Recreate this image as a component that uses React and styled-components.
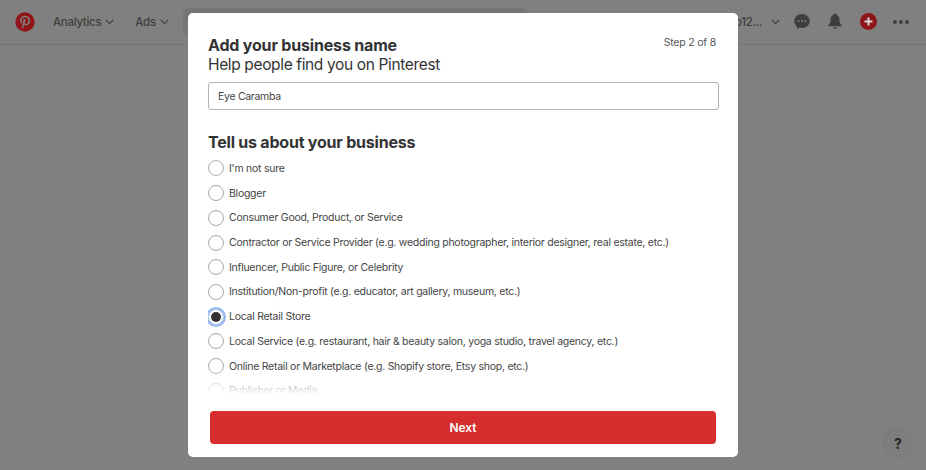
import React from 'react'
import styled, { createGlobalStyle } from 'styled-components'

const options = [
  "I'm not sure",
  'Blogger',
  'Consumer Good, Product, or Service',
  'Contractor or Service Provider (e.g. wedding photographer, interior designer, real estate, etc.)',
  'Influencer, Public Figure, or Celebrity',
  'Institution/Non-profit (e.g. educator, art gallery, museum, etc.)',
  'Local Retail Store',
  'Local Service (e.g. restaurant, hair & beauty salon, yoga studio, travel agency, etc.)',
  'Online Retail or Marketplace (e.g. Shopify store, Etsy shop, etc.)',
  'Publisher or Media',
]

function Chevron() {
  return (
    <svg width="9" height="6" viewBox="0 0 9 6" fill="none">
      <path d="M.8.9l3.7 3.7L8.2.9" stroke="#3e3e3e" strokeWidth="1.3" />
    </svg>
  )
}

export default function App() {
  return (
    <Page>
      <GlobalStyle />
      <Header>
        <svg width="20" height="20" viewBox="0 0 20 20">
          <circle cx="10" cy="10" r="9.700" fill="#8f1518" />
          <path
            d="M10.3 3.8c-3.4 0-5.2 2.3-5.2 4.7 0 1.2.6 2.6 1.6 3 .2.1.3 0 .3-.1l.2-.7c0-.1 0-.2-.1-.3-.3-.4-.6-1-.6-1.7 0-1.8 1.3-3.4 3.6-3.4 1.9 0 3.3 1.3 3.3 3.1 0 2.1-1 3.5-2.4 3.5-.8 0-1.3-.6-1.1-1.4.2-.9.6-1.8.6-2.5 0-.6-.3-1.1-1-1.1-.8 0-1.4.8-1.4 1.9 0 .7.2 1.1.2 1.1l-1 4.100c-.2.800-.1 2.200-.05 2.900 0 .1.15.1.2.05.3-.4 1-1.700 1.300-2.600l.5-1.900c.3.500 1 .9 1.800.9 2.400 0 4.100-2.200 4.100-4.900 0-2.600-2.100-4.500-4.700-4.500z"
            fill="#808080"
          />
        </svg>
        <NavItem $first>Analytics <Chevron /></NavItem>
        <NavItem>Ads <Chevron /></NavItem>
        <SearchBar />
        <Account>jo12... <Chevron /></Account>
        <Icons>
          <svg width="16" height="17" viewBox="0 0 17 17">
            <path d="M8.500.4C3.900.4.300 3.700.300 7.900c0 2.300 1.100 4.300 2.800 5.700v3l2.800-1.600c.8.200 1.700.4 2.600.4 4.600 0 8.200-3.400 8.200-7.500S13.100.4 8.500.4z" fill="#3e3e3e" />
            <circle cx="5" cy="8" r="1" fill="#808080" />
            <circle cx="8.500" cy="8" r="1" fill="#808080" />
            <circle cx="12" cy="8" r="1" fill="#808080" />
          </svg>
          <svg width="14" height="17" viewBox="0 0 15 17">
            <path d="M7.500 0C6.600 0 5.900.6 5.700 1.500 3.600 2.200 2.800 4 2.800 6.500c0 3.100-1 4.500-2.500 6v1h14.400v-1c-1.500-1.500-2.500-2.900-2.500-6 0-2.500-.8-4.300-2.900-5C9.100.6 8.400 0 7.500 0zM5.500 14.500h4l-2 2.300z" fill="#3e3e3e" />
          </svg>
          <svg width="17" height="17" viewBox="0 0 17 17">
            <circle cx="8.500" cy="8.500" r="8.500" fill="#8f1518" />
            <path d="M8.500 4.500v8M4.500 8.500h8" stroke="#d8d8d8" strokeWidth="2" />
          </svg>
          <DotsIcon width="16" height="4" viewBox="0 0 16 4">
            <circle cx="2" cy="2" r="1.900" fill="#3e3e3e" />
            <circle cx="8" cy="2" r="1.900" fill="#3e3e3e" />
            <circle cx="14" cy="2" r="1.900" fill="#3e3e3e" />
          </DotsIcon>
        </Icons>
      </Header>

      <HelpButton>?</HelpButton>

      <Modal>
        <TitleRow>
          <div>
            <Title>Add your business name</Title>
            <Subtitle>Help people find you on Pinterest</Subtitle>
          </div>
          <Step>Step 2 of 8</Step>
        </TitleRow>
        <NameInput defaultValue="Eye Caramba" />
        <SectionTitle>Tell us about your business</SectionTitle>
        <ListWrap>
          <List>
            {options.map((label) => (
              <Row key={label}>
                <Radio $checked={label === 'Local Retail Store'} />
                <span>{label}</span>
              </Row>
            ))}
          </List>
          <Fade />
        </ListWrap>
        <NextButton>Next</NextButton>
      </Modal>
    </Page>
  )
}

const GlobalStyle = createGlobalStyle`
  html, body {
    margin: 0;
    padding: 0;
    background: #808080;
  }
  * {
    box-sizing: border-box;
  }
`

const Page = styled.div`
  position: relative;
  width: 926px;
  height: 470px;
  overflow: hidden;
  background: #808080;
  font-family: Inter, "Liberation Sans", sans-serif;
  color: #333;
`

const Header = styled.header`
  display: flex;
  align-items: center;
  height: 45px;
  padding: 0 17px 1px 15px;
  border-bottom: 1px solid #757575;
`

const NavItem = styled.div`
  display: flex;
  align-items: center;
  gap: 4px;
  margin-left: ${(p) => (p.$first ? '18px' : '21px')};
  font-size: 11.5px;
  font-weight: 500;
  letter-spacing: -0.3px;
  color: #3e3e3e;
`

const SearchBar = styled.div`
  align-self: flex-start;
  width: 345px;
  height: 28px;
  margin: 8px 0 0 14px;
  border-radius: 5px;
  background: #767676;
`

const Account = styled.div`
  display: flex;
  align-items: center;
  gap: 9px;
  margin-left: auto;
  font-size: 11.5px;
  font-weight: 500;
  letter-spacing: -0.3px;
  color: #3e3e3e;
`

const Icons = styled.div`
  display: flex;
  align-items: center;
  gap: 18px;
  margin-left: 14px;
`

const DotsIcon = styled.svg`
  margin-left: -2px;
`

const HelpButton = styled.div`
  position: absolute;
  right: 14px;
  bottom: 13px;
  display: flex;
  align-items: center;
  justify-content: center;
  width: 28px;
  height: 28px;
  border-radius: 50%;
  background: #7e7e7e;
  box-shadow: 0 0 2px rgba(0, 0, 0, 0.12);
  font-size: 14px;
  font-weight: 700;
  color: #222;
`

const Modal = styled.div`
  position: absolute;
  left: 188px;
  top: 13px;
  display: flex;
  flex-direction: column;
  width: 550px;
  height: 444px;
  padding: 23px 19px 13px 20px;
  border-radius: 5px;
  background: #fff;
`

const TitleRow = styled.div`
  display: flex;
  justify-content: space-between;
  align-items: flex-start;
`

const Title = styled.h1`
  margin: 0;
  font-size: 16px;
  line-height: 19px;
  font-weight: 700;
  letter-spacing: -0.18px;
  color: #333;
`

const Subtitle = styled.p`
  margin: 0;
  font-size: 15.5px;
  line-height: 20px;
  letter-spacing: -0.36px;
  color: #333;
`

const Step = styled.div`
  margin: 0 3px 0 0;
  font-size: 10.5px;
  line-height: 14px;
  letter-spacing: -0.2px;
  color: #555;
`

const NameInput = styled.input`
  display: block;
  width: 511px;
  height: 28px;
  margin-top: 7px;
  padding: 0 9px;
  border: 1px solid #b5b5b5;
  border-radius: 3px;
  outline: none;
  font: 400 10.5px Inter, "Liberation Sans", sans-serif;
  letter-spacing: -0.3px;
  color: #444;
`

const SectionTitle = styled.h2`
  margin: 22px 0 0;
  font-size: 16px;
  line-height: 20px;
  font-weight: 700;
  letter-spacing: -0.22px;
  color: #333;
`

const ListWrap = styled.div`
  position: relative;
  height: 243px;
  margin-top: 4px;
  overflow: hidden;
`

const List = styled.div`
  display: flex;
  flex-direction: column;
`

const Row = styled.div`
  display: flex;
  align-items: center;
  flex: none;
  gap: 5px;
  height: 24.72px;
  font-size: 10.5px;
  letter-spacing: -0.26px;
  color: #444;
`

const Radio = styled.span`
  flex: none;
  width: 16px;
  height: 16px;
  border-radius: 50%;
  border: 1px solid #a8a8a8;
  background: #fff;
  ${(p) =>
    p.$checked &&
    `
    padding: 2px;
    background: #333;
    background-clip: content-box;
    border: 1px solid #c4d6f2;
    box-shadow: 0 0 0 2px #94b8ee;
  `}
`

const Fade = styled.div`
  position: absolute;
  left: 0;
  right: 0;
  bottom: 0;
  height: 30px;
  background: linear-gradient(rgba(255, 255, 255, 0), #fff 85%);
`

const NextButton = styled.button`
  width: 506px;
  height: 33px;
  margin: auto 0 0 2px;
  border: 0;
  border-radius: 4px;
  background: #d62d2f;
  font: 600 12px Inter, "Liberation Sans", sans-serif;
  color: #fff;
`
